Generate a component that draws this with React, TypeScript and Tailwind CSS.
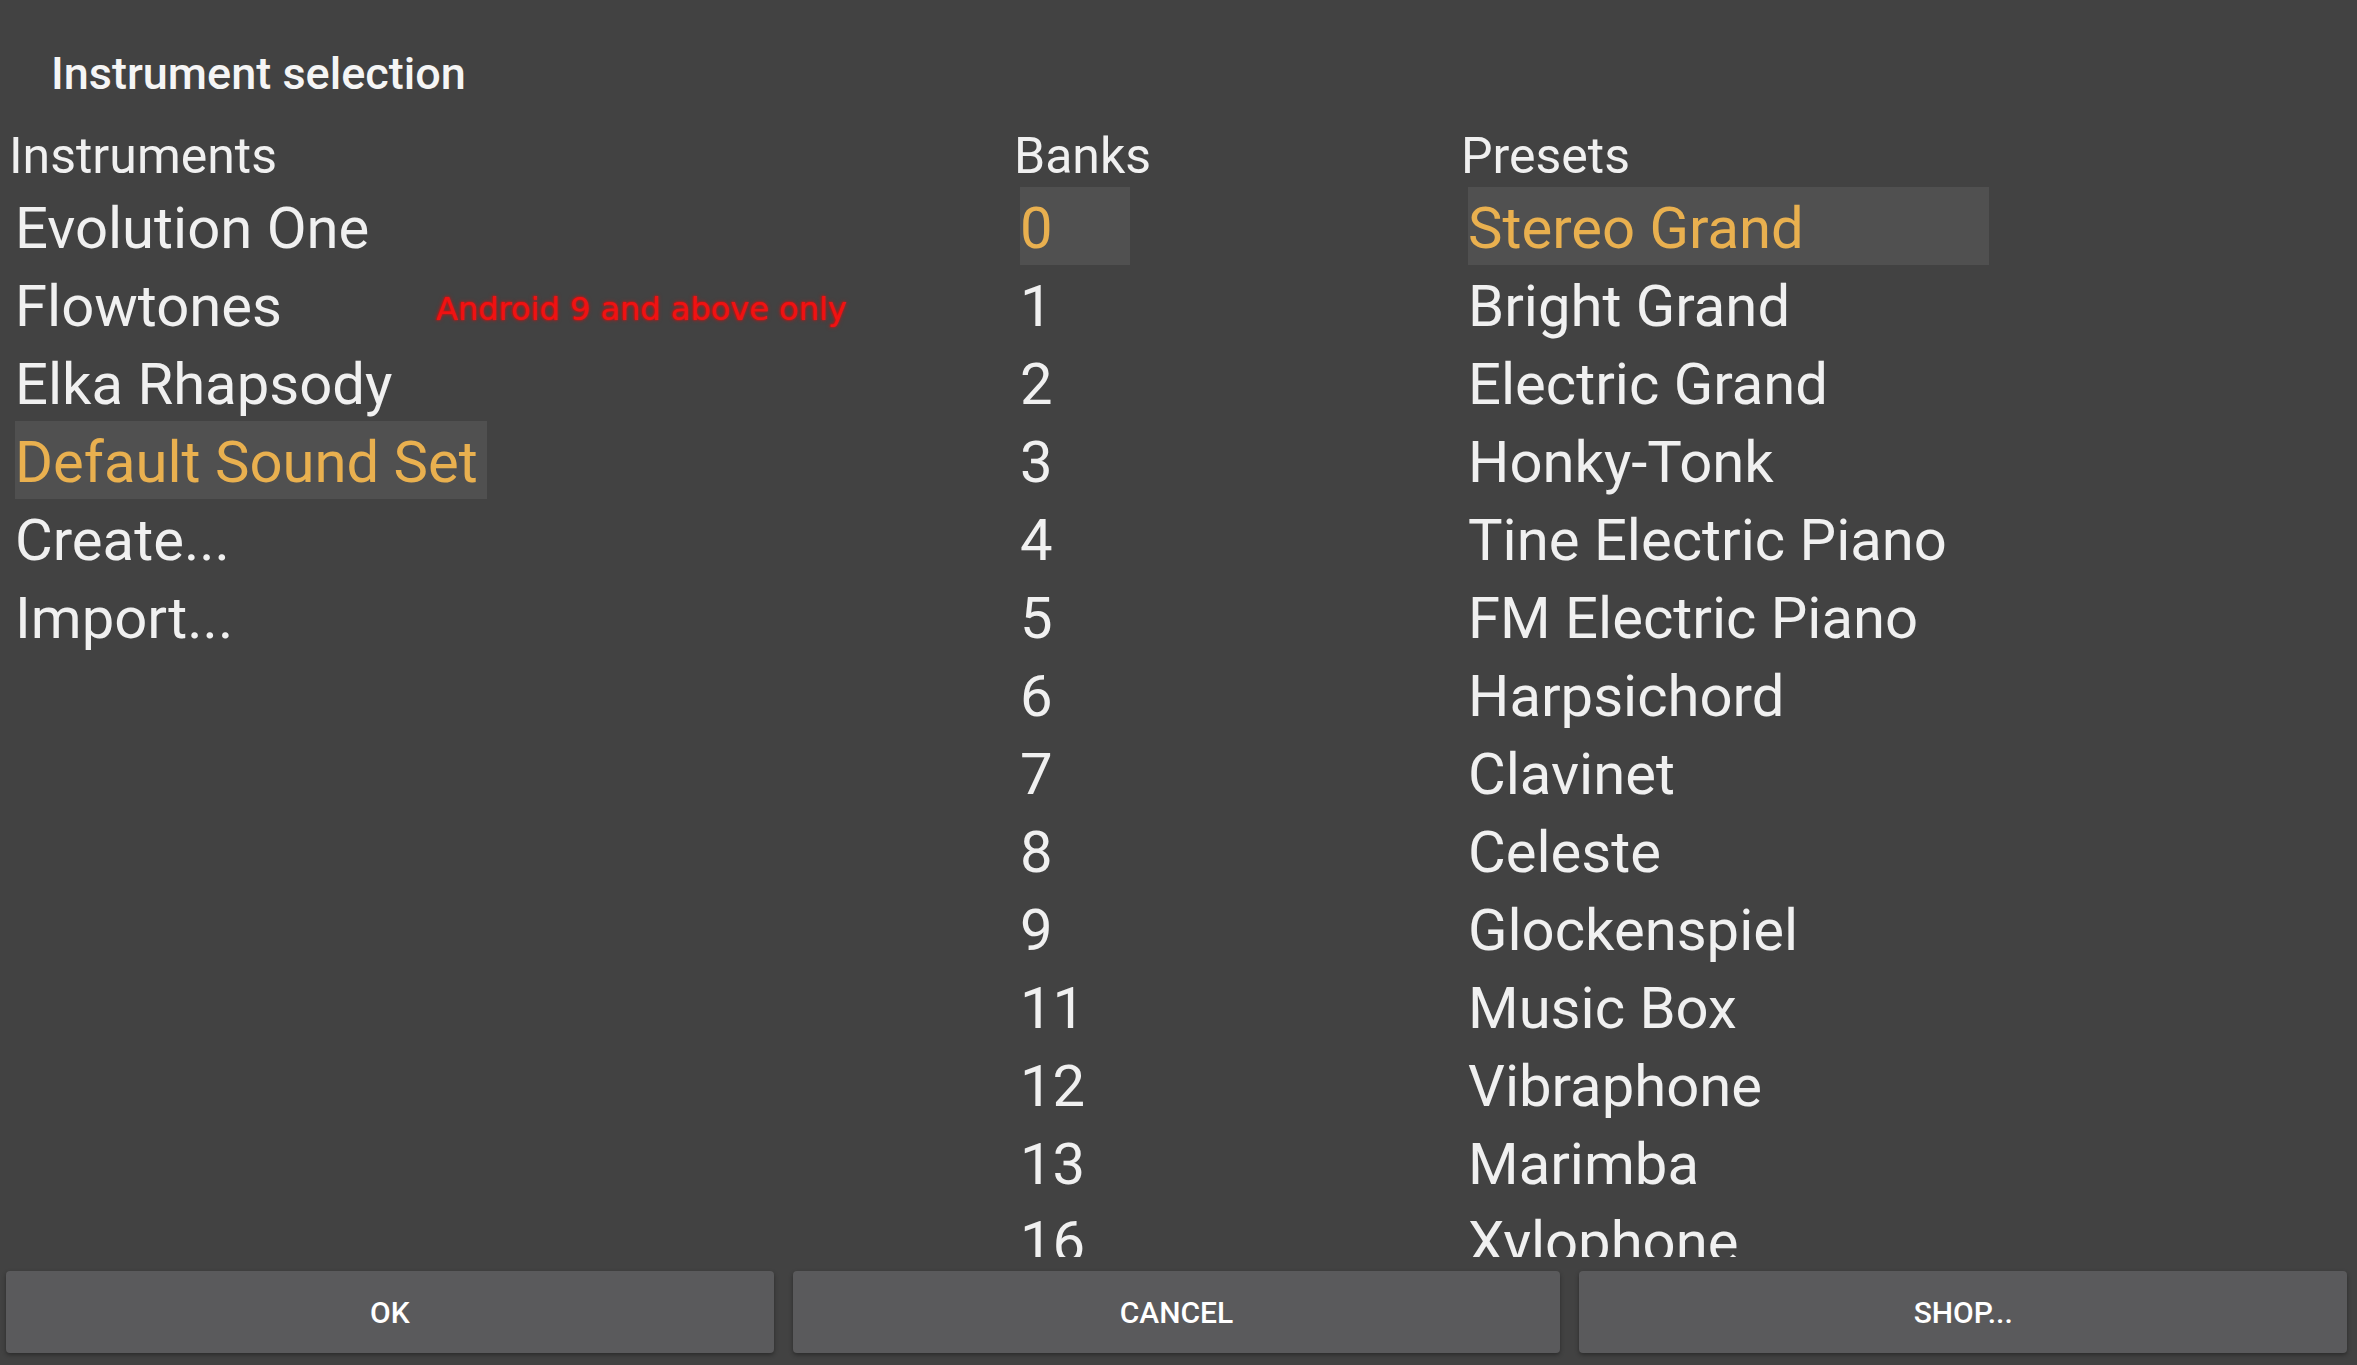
import React, { useState } from 'react';

const instruments = [
  'Evolution One',
  'Flowtones',
  'Elka Rhapsody',
  'Default Sound Set',
  'Create...',
  'Import...',
];

const banks = ['0', '1', '2', '3', '4', '5', '6', '7', '8', '9', '11', '12', '13', '16', '17', '24', '25'];

const presets = [
  'Stereo Grand',
  'Bright Grand',
  'Electric Grand',
  'Honky-Tonk',
  'Tine Electric Piano',
  'FM Electric Piano',
  'Harpsichord',
  'Clavinet',
  'Celeste',
  'Glockenspiel',
  'Music Box',
  'Vibraphone',
  'Marimba',
  'Xylophone',
  'Tubular Bells',
  'Dulcimer',
];

function Row({
  label,
  selected,
  onClick,
  children,
}: {
  label: string;
  selected: boolean;
  onClick: () => void;
  children?: React.ReactNode;
}) {
  return (
    <div
      onClick={onClick}
      className={`relative box-border h-[78px] shrink-0 cursor-pointer whitespace-nowrap pt-[2px] text-[58px] leading-[78px] ${
        selected ? 'bg-[#505050] text-[#e9b04f]' : 'text-[#f0f0f0]'
      }`}
    >
      {label}
      {children}
    </div>
  );
}

function App() {
  const [instrument, setInstrument] = useState(3);
  const [bank, setBank] = useState(0);
  const [preset, setPreset] = useState(0);

  return (
    <div className="flex h-[1365px] w-[2357px] flex-col overflow-hidden bg-[#424242] font-['Roboto',sans-serif] text-[#f0f0f0]">
      {/* title */}
      <div className="pl-[51px] pt-[48px] text-[45px] font-medium leading-[52px] text-[#f5f5f5]">
        Instrument selection
      </div>

      {/* columns */}
      <div className="mt-[25px] flex min-h-0 flex-1 overflow-hidden">
        <div className="ml-[5px] flex w-[1005px] shrink-0 flex-col">
          <div className="h-[62px] pl-[4px] text-[50px] leading-[62px]">Instruments</div>
          <div className="ml-[10px] flex w-fit flex-col">
            {instruments.map((name, i) => (
              <Row key={name} label={name} selected={i === instrument} onClick={() => setInstrument(i)}>
                {name === 'Flowtones' && (
                  <span className="absolute left-[421px] top-[20px] font-['DejaVu_Sans',sans-serif] text-[32px] leading-normal text-[#f01212] [text-shadow:0_0_2px_#ff0000,0_0_4px_rgba(255,0,0,0.6)]">
                    Android 9 and above only
                  </span>
                )}
              </Row>
            ))}
            {/* list is as wide as its longest entry plus a little */}
            <div className="w-[472px]" />
          </div>
        </div>

        <div className="flex w-[447px] shrink-0 flex-col">
          <div className="h-[62px] pl-[4px] text-[50px] leading-[62px]">Banks</div>
          <div className="ml-[10px] flex w-[110px] flex-col">
            {banks.map((b, i) => (
              <Row key={b} label={b} selected={i === bank} onClick={() => setBank(i)} />
            ))}
          </div>
        </div>

        <div className="flex flex-col">
          <div className="h-[62px] pl-[4px] text-[50px] leading-[62px]">Presets</div>
          <div className="ml-[11px] flex w-[521px] flex-col">
            {presets.map((p, i) => (
              <Row key={p} label={p} selected={i === preset} onClick={() => setPreset(i)} />
            ))}
          </div>
        </div>
      </div>

      {/* buttons */}
      <div className="flex gap-[19px] pb-[12px] pl-[6px] pr-[10px] pt-[14px]">
        {['OK', 'CANCEL', 'SHOP...'].map((b) => (
          <button
            key={b}
            className="flex h-[82px] flex-1 items-center justify-center rounded-[4px] bg-[#5a5a5c] text-[30px] font-medium text-white shadow-[0_2px_4px_rgba(0,0,0,0.35)]"
          >
            {b}
          </button>
        ))}
      </div>
    </div>
  );
}

export default App;
